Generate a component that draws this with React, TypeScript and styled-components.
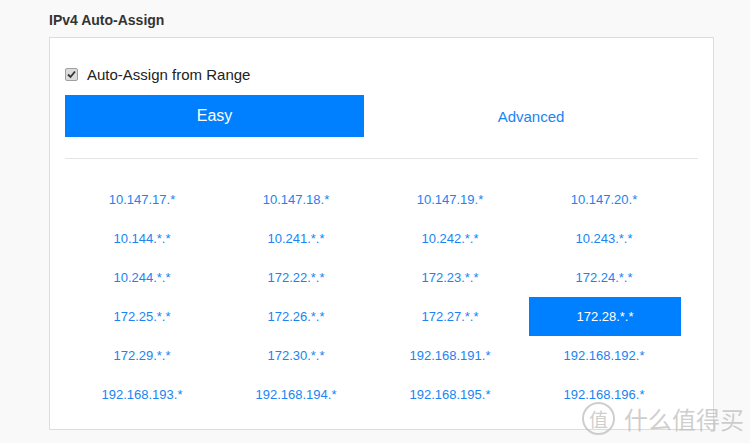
import styled, { createGlobalStyle } from "styled-components";

const Global = createGlobalStyle`
  html, body {
    margin: 0;
    padding: 0;
    background: #f9f9f9;
    font-family: "Liberation Sans", Arial, sans-serif;
  }
`;

const Page = styled.div`
  position: relative;
  width: 750px;
  height: 443px;
  overflow: hidden;
  padding: 13px 0 0 49px;
  box-sizing: border-box;
`;

const Title = styled.h3`
  margin: 0 0 10px 0;
  font-size: 14px;
  font-weight: bold;
  color: #333;
  line-height: 14px;
`;

const Panel = styled.div`
  width: 665px;
  height: 393px;
  box-sizing: border-box;
  background: #fff;
  border: 1px solid #dddddd;
  padding: 28px 15px 0 15px;
`;

const CheckRow = styled.label`
  display: flex;
  align-items: center;
  gap: 9px;
  height: 16px;
  font-size: 15px;
  color: #222;
  margin-bottom: 13px;
`;

const Box = styled.span`
  width: 11px;
  height: 11px;
  border: 1px solid #a0a0a0;
  border-radius: 2px;
  background: #dcdcdc;
  display: flex;
  align-items: center;
  justify-content: center;
`;

const Tabs = styled.div`
  display: flex;
  height: 42px;
  border-bottom: 1px solid #e5e5e5;
  padding-bottom: 21px;
  margin-bottom: 21px;
`;

const Tab = styled.div<{ $active?: boolean }>`
  flex: ${(p) => (p.$active ? "0 0 299px" : "1")};
  display: flex;
  align-items: center;
  justify-content: center;
  font-size: ${(p) => (p.$active ? "16px" : "15px")};
  background: ${(p) => (p.$active ? "#0080ff" : "transparent")};
  color: ${(p) => (p.$active ? "#fff" : "#1a84f2")};
`;

const Grid = styled.div`
  display: grid;
  grid-template-columns: repeat(4, 154px);
  grid-auto-rows: 39px;
`;

const Cell = styled.div<{ $selected?: boolean }>`
  display: flex;
  align-items: center;
  justify-content: center;
  font-size: 13px;
  margin-left: ${(p) => (p.$selected ? "2px" : "0")};
  background: ${(p) => (p.$selected ? "#0080ff" : "transparent")};
  color: ${(p) => (p.$selected ? "#fff" : "#1a84f2")};
`;

const Watermark = styled.div`
  position: absolute;
  left: 582px;
  top: 401px;
  display: flex;
  align-items: center;
  gap: 9px;
  color: rgba(190, 190, 190, 0.75);
  font-family: "Noto Sans CJK SC", sans-serif;
  pointer-events: none;
`;

const Seal = styled.span`
  width: 29px;
  height: 29px;
  border: 2px solid rgba(190, 190, 190, 0.75);
  border-radius: 50%;
  display: flex;
  align-items: center;
  justify-content: center;
  font-size: 19px;
  line-height: 1;
`;

const Brand = styled.span`
  font-size: 24px;
  letter-spacing: 0px;
`;

const ranges = [
  "10.147.17.*", "10.147.18.*", "10.147.19.*", "10.147.20.*",
  "10.144.*.*", "10.241.*.*", "10.242.*.*", "10.243.*.*",
  "10.244.*.*", "172.22.*.*", "172.23.*.*", "172.24.*.*",
  "172.25.*.*", "172.26.*.*", "172.27.*.*", "172.28.*.*",
  "172.29.*.*", "172.30.*.*", "192.168.191.*", "192.168.192.*",
  "192.168.193.*", "192.168.194.*", "192.168.195.*", "192.168.196.*",
];

export default function App() {
  return (
    <Page>
      <Global />
      <Title>IPv4 Auto-Assign</Title>
      <Panel>
        <CheckRow>
          <Box>
            <svg width="9" height="9" viewBox="0 0 9 9">
              <path d="M1 4.5 L3.5 7 L8 1.5" stroke="#333" strokeWidth="1.8" fill="none" />
            </svg>
          </Box>
          Auto-Assign from Range
        </CheckRow>
        <Tabs>
          <Tab $active>Easy</Tab>
          <Tab>Advanced</Tab>
        </Tabs>
        <Grid>
          {ranges.map((r) => (
            <Cell key={r} $selected={r === "172.28.*.*"}>
              {r}
            </Cell>
          ))}
        </Grid>
      </Panel>
      <Watermark>
        <Seal>值</Seal>
        <Brand>什么值得买</Brand>
      </Watermark>
    </Page>
  );
}
